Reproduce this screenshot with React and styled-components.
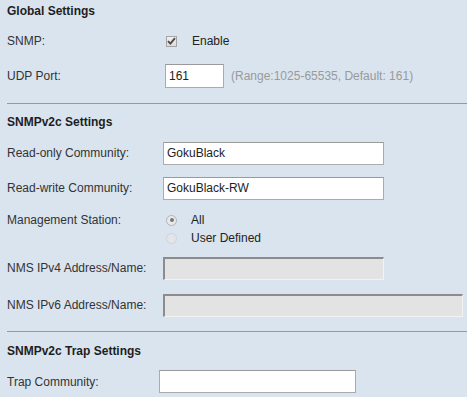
import styled, { createGlobalStyle } from 'styled-components'

const Global = createGlobalStyle`
    html, body {
        margin: 0;
        padding: 0;
        background: #d9e4ef;
    }
    body {
        font-family: "Liberation Sans", Arial, sans-serif;
        font-size: 12px;
        color: #333;
    }
`

const Page = styled.div`
    width: 467px;
    height: 397px;
    overflow: hidden;
    padding-left: 7px;
    box-sizing: border-box;
    background: #d9e4ef;
`
const Heading = styled.div`
    height: ${(p) => p.h}px;
    display: flex;
    align-items: center;
    font-weight: bold;
    color: #1e1e1e;
`
const Row = styled.div`
    display: grid;
    grid-template-columns: ${(p) => p.label}px 1fr;
    align-items: ${(p) => (p.top ? 'start' : 'center')};
    height: ${(p) => p.h}px;
    margin-top: ${(p) => p.mt || 0}px;
`
const Label = styled.div`
    line-height: 18px;
    color: #333;
`
const Field = styled.div`
    display: flex;
    flex-direction: ${(p) => (p.column ? 'column' : 'row')};
    align-items: ${(p) => (p.column ? 'flex-start' : 'center')};
`
const Divider = styled.hr`
    margin: ${(p) => p.mt}px 0 0 0;
    border: 0;
    height: 1px;
    background: #8e9aa6;
`
const TextBox = styled.input`
    box-sizing: border-box;
    width: ${(p) => p.w}px;
    height: ${(p) => p.h || 23}px;
    padding: 0 3px;
    font-family: "Liberation Sans", Arial, sans-serif;
    font-size: 12px;
    color: #222;
    background: #fff;
    border: 1px solid #ababab;
    border-top-color: #9a9a9a;
    outline: none;

    &:disabled {
        background: #e3e3e3;
        border-top: 2px solid #8c8c8c;
        border-left: 2px solid #8c8c8c;
        border-right: 1px solid #f2f2f2;
        border-bottom: 1px solid #f2f2f2;
    }
`
const Hint = styled.span`
    margin-left: 7px;
    color: #9a9a9a;
`
const CheckBox = styled.span`
    box-sizing: border-box;
    width: 11px;
    height: 11px;
    margin-left: 1px;
    border: 1px solid #a4a4a4;
    background: linear-gradient(#f0f0f0, #dcdcdc);
    display: flex;
    align-items: center;
    justify-content: center;
`
const CheckText = styled.span`
    margin-left: 15px;
    color: #222;
`
const RadioLine = styled.label`
    display: flex;
    align-items: center;
    height: 18px;
    color: #222;
`
const Radio = styled.span`
    box-sizing: border-box;
    width: 11px;
    height: 11px;
    margin: 0 14px 0 3px;
    border-radius: 50%;
    border: 1px solid ${(p) => (p.checked ? '#b4b4b4' : '#cfd3d7')};
    background: ${(p) => (p.checked ? '#e9e9e9' : '#e2e6ea')};
    display: flex;
    align-items: center;
    justify-content: center;

    &::after {
        content: '';
        width: 4px;
        height: 4px;
        border-radius: 50%;
        background: ${(p) => (p.checked ? '#777' : 'transparent')};
    }
`

export default function App() {
    return (
        <Page>
            <Global />
            <Heading h={22}>Global Settings</Heading>
            <Row label={158} h={38}>
                <Label>SNMP:</Label>
                <Field>
                    <CheckBox>
                        <svg width="9" height="8" viewBox="0 0 9 8">
                            <path d="M1 4.2 L3.4 6.6 L8 1.2" fill="none" stroke="#4a4a4a" strokeWidth="1.9" />
                        </svg>
                    </CheckBox>
                    <CheckText>Enable</CheckText>
                </Field>
            </Row>
            <Row label={158} h={32}>
                <Label>UDP Port:</Label>
                <Field>
                    <TextBox w={59} h={24} defaultValue="161" />
                    <Hint>(Range:1025-65535, Default: 161)</Hint>
                </Field>
            </Row>
            <Divider mt={11} />

            <Heading h={36}>SNMPv2c Settings</Heading>
            <Row label={156} h={26}>
                <Label>Read-only Community:</Label>
                <Field>
                    <TextBox w={221} defaultValue="GokuBlack" />
                </Field>
            </Row>
            <Row label={156} h={26} mt={9}>
                <Label>Read-write Community:</Label>
                <Field>
                    <TextBox w={221} defaultValue="GokuBlack-RW" />
                </Field>
            </Row>
            <Row label={156} h={36} mt={10} top>
                <Label>Management Station:</Label>
                <Field column>
                    <RadioLine>
                        <Radio checked />
                        All
                    </RadioLine>
                    <RadioLine>
                        <Radio />
                        User Defined
                    </RadioLine>
                </Field>
            </Row>
            <Row label={156} h={26} mt={8}>
                <Label>NMS IPv4 Address/Name:</Label>
                <Field>
                    <TextBox w={221} disabled />
                </Field>
            </Row>
            <Row label={156} h={26} mt={11}>
                <Label>NMS IPv6 Address/Name:</Label>
                <Field>
                    <TextBox w={300} disabled />
                </Field>
            </Row>
            <Divider mt={13} />

            <Heading h={38}>SNMPv2c Trap Settings</Heading>
            <Row label={152} h={22}>
                <Label>Trap Community:</Label>
                <Field>
                    <TextBox w={197} />
                </Field>
            </Row>
        </Page>
    )
}
